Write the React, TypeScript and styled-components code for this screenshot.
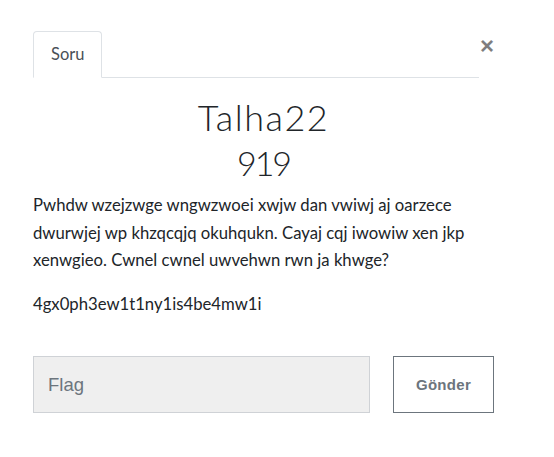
import styled, { createGlobalStyle } from "styled-components";

const GlobalStyle = createGlobalStyle`
    body {
        margin: 0;
        background: #fff;
        font-family: Lato, "Open Sans", sans-serif;
        color: #212529;
    }
`;

const Modal = styled.div`
    width: 461px;
    padding: 31px 0 0 33px;
`;

const Header = styled.div`
    display: flex;
    align-items: flex-start;
`;

const Tabs = styled.ul`
    list-style: none;
    margin: 0;
    padding: 0;
    width: 446px;
    display: flex;
    border-bottom: 1px solid #dee2e6;
`;

const Tab = styled.li<{ active?: boolean }>`
    margin-bottom: -1px;
    padding: 0 17px;
    height: 45px;
    line-height: 45px;
    font-size: 16.5px;
    color: #495057;
    background: #fff;
    border: 1px solid ${props => props.active ? "#dee2e6" : "transparent"};
    border-bottom-color: #fff;
    border-radius: 4px 4px 0 0;
`;

const Close = styled.button`
    margin: 5px 0 0 0;
    padding: 0;
    width: 15px;
    height: 20px;
    border: none;
    background: none;
    font-family: "Liberation Sans", Arial, sans-serif;
    font-weight: 700;
    font-size: 24px;
    line-height: 20px;
    color: #000;
    opacity: 0.5;
    text-align: right;
`;

const Body = styled.div`
    padding-top: 17px;
`;

const Title = styled.h2`
    margin: 0;
    text-align: center;
    font-weight: 300;
    font-size: 36px;
    line-height: 44px;
    letter-spacing: 1.5px;
`;

const Points = styled.h3`
    margin: 4px 0 0 0;
    text-align: center;
    font-weight: 300;
    font-size: 34px;
    line-height: 40px;
    letter-spacing: -2px;
`;

const Description = styled.div`
    margin-top: 9px;
    font-size: 16.7px;
    line-height: 27.5px;
    p {
        margin: 0 0 16px 0;
    }
`;

const Form = styled.form`
    display: flex;
    gap: 23px;
    margin-top: 38px;
`;

const FlagInput = styled.input`
    box-sizing: border-box;
    width: 337px;
    height: 57px;
    padding: 0 14px;
    border: 1px solid #cfd2d6;
    background: #efefef;
    font-family: "Liberation Sans", Arial, sans-serif;
    font-size: 18.5px;
    outline: none;
    &::placeholder {
        color: #6c757d;
    }
`;

const SubmitButton = styled.button`
    box-sizing: border-box;
    width: 101px;
    height: 57px;
    border: 1px solid #6c757d;
    border-radius: 0;
    background: #fff;
    color: #6c757d;
    font-family: "Liberation Sans", Arial, sans-serif;
    font-weight: 700;
    font-size: 15px;
    letter-spacing: 0.3px;
`;

function App() {
    return (
        <>
            <GlobalStyle />
            <Modal>
                <Header>
                    <Tabs>
                        <Tab active>Soru</Tab>
                    </Tabs>
                    <Close>&times;</Close>
                </Header>
                <Body>
                    <Title>Talha22</Title>
                    <Points>919</Points>
                    <Description>
                        <p>Pwhdw wzejzwge wngwzwoei xwjw dan vwiwj aj oarzece dwurwjej wp khzqcqjq okuhqukn. Cayaj cqj iwowiw xen jkp xenwgieo. Cwnel cwnel uwvehwn rwn ja khwge?</p>
                        <p>4gx0ph3ew1t1ny1is4be4mw1i</p>
                    </Description>
                    <Form onSubmit={e => e.preventDefault()}>
                        <FlagInput placeholder="Flag" />
                        <SubmitButton type="submit">Gönder</SubmitButton>
                    </Form>
                </Body>
            </Modal>
        </>
    );
}

export default App;
